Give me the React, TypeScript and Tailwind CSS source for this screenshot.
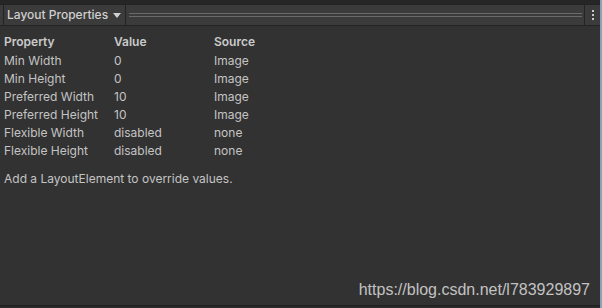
import React from "react";

const rows = [
  ["Min Width", "0", "Image"],
  ["Min Height", "0", "Image"],
  ["Preferred Width", "10", "Image"],
  ["Preferred Height", "10", "Image"],
  ["Flexible Width", "disabled", "none"],
  ["Flexible Height", "disabled", "none"],
];

export default function App() {
  return (
    <div className="flex h-[308px] w-[602px] bg-[#323232] font-['Inter',sans-serif] text-[#c4c4c4]">
      <div className="flex flex-1 flex-col">
        <div className="h-1 bg-[#262626]" />
        <div className="flex h-[22px] items-stretch border-y border-[#232323] bg-[#3b3b3b]">
          <div className="ml-[3px] flex items-center gap-[5px] border-x border-[#232323] pl-[3px] pr-[4px] text-[12px] font-medium text-[#cfcfcf]">
            <span>Layout Properties</span>
            <svg width="8" height="6" viewBox="0 0 8 6" className="mt-px">
              <path d="M0 0 H8 L4 5 Z" fill="#d0d0d0" />
            </svg>
          </div>
          <div className="ml-[3px] flex flex-1 flex-col justify-center gap-[2px]">
            <div className="h-px bg-[#6a6a6a]" />
            <div className="h-px bg-[#6a6a6a]" />
          </div>
          <div className="ml-[2px] flex w-[16px] flex-col items-center justify-center gap-[2px] border-l border-[#232323]">
            <div className="h-[2px] w-[2px] bg-[#c8c8c8]" />
            <div className="h-[2px] w-[2px] bg-[#c8c8c8]" />
            <div className="h-[2px] w-[2px] bg-[#c8c8c8]" />
          </div>
        </div>
        <div className="flex flex-1 flex-col px-[4px] pt-[6px] text-[12px]">
          <div className="flex h-[20px] items-center font-semibold text-[#cacaca]">
            <span className="w-[110px]">Property</span>
            <span className="w-[100px]">Value</span>
            <span>Source</span>
          </div>
          {rows.map(([p, v, s]) => (
            <div key={p} className="flex h-[18px] items-center">
              <span className="w-[110px]">{p}</span>
              <span className="w-[100px]">{v}</span>
              <span>{s}</span>
            </div>
          ))}
          <div className="mt-[10px]">Add a LayoutElement to override values.</div>
          <div className="mt-auto flex justify-end pb-[3px] pr-[6px] font-['Liberation_Sans',sans-serif] text-[16px] text-[#c2c2c2]">
            https://blog.csdn.net/l783929897
          </div>
        </div>
        <div className="h-px bg-[#1e1e1e]" />
        <div className="h-[2px] bg-[#2a2a2a]" />
      </div>
      <div className="w-[2px] bg-[#8fa0b4]" />
    </div>
  );
}
